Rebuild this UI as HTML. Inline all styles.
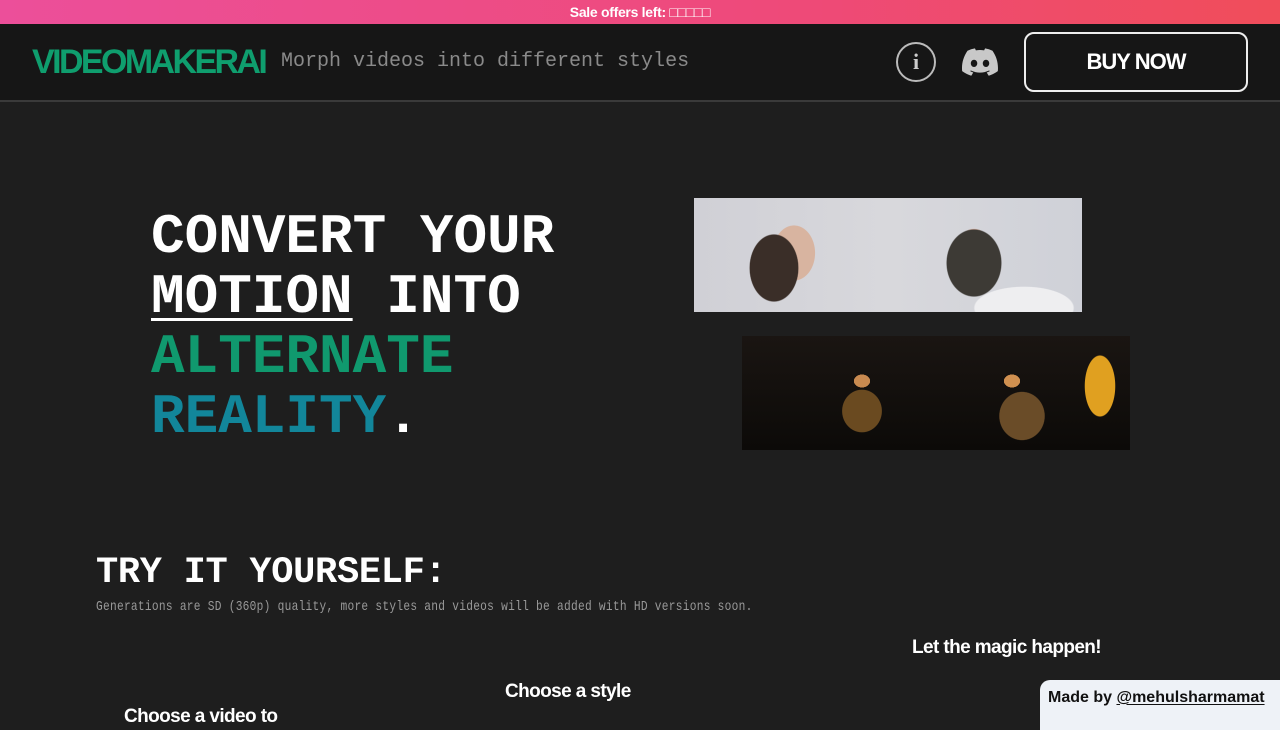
<!DOCTYPE html>
<html><head><meta charset="utf-8"><style>
*{margin:0;padding:0;box-sizing:border-box}
body{width:1280px;height:720px;overflow:hidden;background:#1e1e1e;font-family:"Liberation Sans",sans-serif;position:relative}
.top{height:24px;background:linear-gradient(90deg,#ec4f9a,#ee4a7a 60%,#f04d5a);color:#fff;font-weight:bold;font-size:14px;text-align:center;line-height:24px;letter-spacing:-0.3px}
.hdr{height:78px;background:#161616;border-bottom:2px solid #3a3a3a;position:relative}
.logo{position:absolute;left:32px;top:20px;color:#0f9e6e;font-weight:bold;font-size:32px;letter-spacing:-2.4px;transform:scale(1.06,1.08);transform-origin:left top;line-height:1}
.tag{position:absolute;left:281px;top:28px;color:#8a8a8a;font-family:"Liberation Mono",monospace;font-size:20px;line-height:1}
.info{position:absolute;left:896px;top:18px;width:40px;height:40px;border:2px solid #bbb;border-radius:50%;color:#ccc;font:bold 22px "Liberation Serif",serif;text-align:center;line-height:36px}
.btn{position:absolute;left:1024px;top:8px;width:224px;height:60px;border:2px solid #eee;border-radius:10px;color:#fff;font-weight:bold;font-size:22px;text-align:center;line-height:56px;letter-spacing:-1px}
.hero{position:absolute;left:151px;top:207px;font-family:"Liberation Mono",monospace;font-size:56px;line-height:60px;color:#fff;font-weight:bold}
.hero u{text-decoration-thickness:3px;text-underline-offset:6px}
.g1{color:#10996e}.g2{color:#12869a}
.try{position:absolute;left:96px;top:555px;font-family:"Liberation Mono",monospace;font-size:37px;color:#fff;font-weight:bold;line-height:1;letter-spacing:-0.3px}
.sub{position:absolute;left:96px;top:600px;font-family:"Liberation Mono",monospace;font-size:14px;color:#999;transform:scaleX(0.8);transform-origin:left;white-space:nowrap;line-height:1;letter-spacing:0.33px}
.lbl{position:absolute;color:#fff;font-weight:bold;font-size:19px;letter-spacing:-0.6px;line-height:1}
.made{position:absolute;left:1040px;top:680px;width:250px;height:50px;background:#eef2f7;border-radius:10px 0 0 0;padding:9px 0 0 8px;font-weight:bold;font-size:16px;color:#111}
.made u{text-underline-offset:2px}
.img1{position:absolute;left:694px;top:198px;width:388px;height:114px;background:
radial-gradient(ellipse 40px 55px at 80px 70px,#3a2e28 60%,transparent 62%),
radial-gradient(ellipse 26px 34px at 100px 55px,#d8b4a0 80%,transparent 82%),
radial-gradient(ellipse 45px 55px at 280px 65px,#3d3a35 60%,transparent 62%),
radial-gradient(ellipse 22px 30px at 280px 55px,#e0bcae 80%,transparent 82%),
radial-gradient(ellipse 70px 30px at 330px 110px,#eeeef0 70%,transparent 72%),
linear-gradient(90deg,#d0d0d6,#d8d8dc 50%,#cfd1d8)}
.img2{position:absolute;left:742px;top:336px;width:388px;height:114px;background:
radial-gradient(ellipse 25px 50px at 358px 50px,#e0a020 60%,transparent 62%),
radial-gradient(ellipse 28px 30px at 120px 75px,#6a4a20 70%,transparent 72%),
radial-gradient(ellipse 32px 34px at 280px 80px,#6a4c28 70%,transparent 72%),
radial-gradient(ellipse 10px 8px at 120px 45px,#c88a50 80%,transparent 82%),
radial-gradient(ellipse 10px 8px at 270px 45px,#d09050 80%,transparent 82%),
linear-gradient(180deg,#1a1512,#0c0a08)}
</style></head><body>
<div class="top">Sale offers left: □□□□□</div>
<div class="hdr">
<div class="logo">VIDEOMAKERAI</div>
<div class="tag">Morph videos into different styles</div>
<div class="info">i</div>
<svg style="position:absolute;left:962px;top:24px" width="36" height="28" viewBox="0 0 127 96"><path fill="#c8c8c8" d="M107.7 8.1A105 105 0 0 0 81.5 0a72 72 0 0 0-3.4 6.8 97.7 97.7 0 0 0-29.1 0A72 72 0 0 0 45.6 0 105.9 105.9 0 0 0 19.4 8.1C2.8 32.7-1.7 56.6.5 80.2a105.7 105.7 0 0 0 32.2 16.1 77.7 77.7 0 0 0 6.9-11.1 68.4 68.4 0 0 1-10.9-5.2c.9-.7 1.8-1.4 2.6-2.1a75.6 75.6 0 0 0 64.3 0c.9.7 1.7 1.4 2.6 2.1a68.7 68.7 0 0 1-10.9 5.2 77 77 0 0 0 6.9 11.1 105.3 105.3 0 0 0 32.2-16.1c2.6-27.3-4.5-51-18.8-72.1zM42.5 65.7c-6.3 0-11.4-5.7-11.4-12.8s5-12.8 11.4-12.8 11.5 5.8 11.4 12.8-5 12.8-11.4 12.8zm42.2 0c-6.3 0-11.4-5.7-11.4-12.8s5-12.8 11.4-12.8 11.5 5.8 11.4 12.8-5 12.8-11.4 12.8z"/></svg>
<div class="btn">BUY NOW</div>
</div>
<div class="hero">CONVERT YOUR<br><u>MOTION</u> INTO<br><span class="g1">ALTERNATE</span><br><span class="g2">REALITY</span>.</div>
<div class="img1"></div>
<div class="img2"></div>
<div class="try">TRY IT YOURSELF:</div>
<div class="sub">Generations are SD (360p) quality, more styles and videos will be added with HD versions soon.</div>
<div class="lbl" style="left:912px;top:638px">Let the magic happen!</div>
<div class="lbl" style="left:505px;top:682px">Choose a style</div>
<div class="lbl" style="left:124px;top:707px">Choose a video to</div>
<div class="made">Made by <u>@mehulsharmamat</u></div>
</body></html>
